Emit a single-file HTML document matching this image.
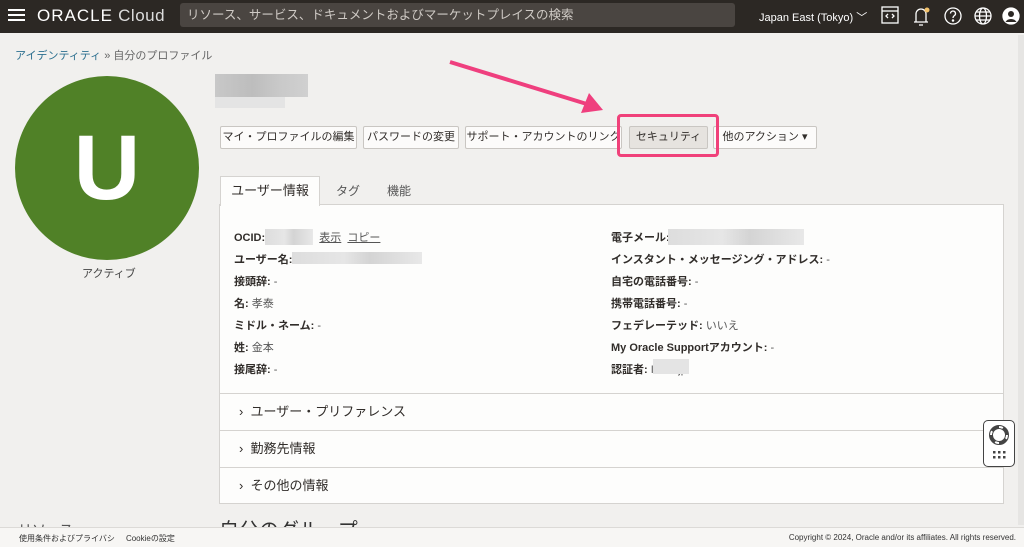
<!DOCTYPE html>
<html><head><meta charset="utf-8"><style>
*{box-sizing:border-box;margin:0;padding:0}
body{width:1024px;height:547px;overflow:hidden;background:#f1f0ee;font-family:"Liberation Sans","Noto Sans CJK JP",sans-serif;position:relative;color:#312d2a}
.a{position:absolute;white-space:nowrap}
.top{position:absolute;left:0;top:0;width:1024px;height:33px;background:#2c2824}
.btn{position:absolute;top:126px;height:23px;border:1px solid #c9c6c2;background:#fcfbfa;border-radius:2px;font-size:11px;line-height:21px;text-align:center;color:#312d2a;white-space:nowrap;overflow:hidden}
.lab{position:absolute;font-size:11px;font-weight:bold;white-space:nowrap}
.lab span{font-weight:normal;color:#555}
.blur{position:absolute;background:linear-gradient(90deg,#ddd,#e6e6e6 40%,#d4d4d4 60%,#e8e8e8)}
.sec{position:absolute;left:219px;width:785px;height:37px;border-top:1px solid #d5d3d0;font-size:13px;line-height:36px;padding-left:20px;color:#312d2a}
</style></head><body>
<div class="top"></div>
<div class="a" style="left:8px;top:9px;width:17px;height:2px;background:#fff;box-shadow:0 5px 0 #fff,0 10px 0 #fff"></div>
<div class="a" style="left:37px;top:6px;color:#fff;font-size:17px;letter-spacing:0.5px"><b style="font-weight:normal;letter-spacing:1px">ORACLE</b> <span style="color:#ddd">Cloud</span></div>
<div class="a" style="left:180px;top:3px;width:555px;height:24px;background:#4a4541;border-radius:3px;color:#cfcac5;font-size:12.5px;line-height:24px;padding-left:7px">リソース、サービス、ドキュメントおよびマーケットプレイスの検索</div>
<div class="a" style="left:759px;top:9px;color:#fff;font-size:11px">Japan East (Tokyo) ﹀</div>
<svg class="a" style="left:880px;top:4px" width="140" height="24" viewBox="0 0 140 24" fill="none" stroke="#fff" stroke-width="1.3">
<rect x="2" y="3" width="16" height="16"/><line x1="2" y1="7" x2="18" y2="7"/><path d="M8 10l-2 2 2 2M12 10l2 2-2 2"/>
<path d="M36 18V10a5 5 0 0110 0v8zM34 18h14M39 21h4"/><circle cx="47" cy="6" r="2.5" fill="#f3c26b" stroke="none"/>
<circle cx="73" cy="12" r="8"/><path d="M70.5 9.5a2.5 2.5 0 114 2c-1 .7-1.5 1.2-1.5 2.5"/><circle cx="73" cy="16.5" r=".6" fill="#fff"/>
<circle cx="103" cy="12" r="8"/><ellipse cx="103" cy="12" rx="3.5" ry="8"/><path d="M95 12h16M96 8h14M96 16h14"/>
<circle cx="131" cy="12" r="8" fill="#fff"/><circle cx="131" cy="10" r="3" fill="#2c2824" stroke="none"/><path d="M125.5 18a6 5 0 0111 0" fill="#2c2824" stroke="none"/>
</svg>
<div class="a" style="left:15px;top:47px;font-size:11px;color:#2c6f8f">アイデンティティ <span style="color:#666">» 自分のプロファイル</span></div>
<div class="a" style="left:15px;top:76px;width:184px;height:184px;border-radius:50%;background:#508127"></div>
<div class="a" style="left:15px;top:118px;width:184px;text-align:center;color:#fff;font-size:92px;font-weight:bold;line-height:100px">U</div>
<div class="a" style="left:82px;top:265px;font-size:11px;color:#444">アクティブ</div>
<div class="blur" style="left:215px;top:74px;width:93px;height:23px;background:linear-gradient(90deg,#c8c8c8,#bdbdbd 40%,#c9c9c9 70%,#d0d0d0)"></div>
<div class="blur" style="left:215px;top:97px;width:70px;height:11px;background:#e4e4e4"></div>
<div class="btn" style="left:220px;width:137px">マイ・プロファイルの編集</div>
<div class="btn" style="left:363px;width:96px">パスワードの変更</div>
<div class="btn" style="left:465px;width:157px">サポート・アカウントのリンク</div>
<div class="btn" style="left:629px;width:79px;background:#e6e3df">セキュリティ</div>
<div class="btn" style="left:713px;width:104px">他のアクション ▾</div>
<div class="a" style="left:617px;top:114px;width:102px;height:43px;border:3px solid #f0417a;border-radius:4px"></div>
<svg class="a" style="left:440px;top:55px" width="175" height="65"><line x1="10" y1="7" x2="150" y2="50" stroke="#ef3f7e" stroke-width="4"/><path d="M163 55L141 58l8-20z" fill="#ef3f7e"/></svg>
<div class="a" style="left:219px;top:204px;width:785px;height:300px;background:#fdfdfc;border:1px solid #d5d3d0"></div>
<div class="a" style="left:220px;top:176px;width:100px;height:30px;background:#fdfdfc;border:1px solid #d5d3d0;border-bottom:none;font-size:13px;line-height:28px;text-align:center">ユーザー情報</div>
<div class="a" style="left:336px;top:182px;font-size:12px;color:#555">タグ</div>
<div class="a" style="left:387px;top:182px;font-size:12px;color:#555">機能</div>
<div class="lab" style="left:234px;top:229px">OCID: <span style="display:inline-block;width:48px"></span> <u style="font-weight:normal;color:#555">表示</u> &nbsp;<u style="font-weight:normal;color:#555">コピー</u></div>
<div class="blur" style="left:265px;top:229px;width:48px;height:16px"></div>
<div class="lab" style="left:234px;top:251px">ユーザー名:</div>
<div class="blur" style="left:292px;top:252px;width:130px;height:12px"></div>
<div class="lab" style="left:234px;top:273px">接頭辞: <span>-</span></div>
<div class="lab" style="left:234px;top:295px">名: <span>孝泰</span></div>
<div class="lab" style="left:234px;top:317px">ミドル・ネーム: <span>-</span></div>
<div class="lab" style="left:234px;top:339px">姓: <span>金本</span></div>
<div class="lab" style="left:234px;top:361px">接尾辞: <span>-</span></div>
<div class="lab" style="left:611px;top:229px">電子メール:</div>
<div class="blur" style="left:668px;top:229px;width:136px;height:16px"></div>
<div class="lab" style="left:611px;top:251px">インスタント・メッセージング・アドレス: <span>-</span></div>
<div class="lab" style="left:611px;top:273px">自宅の電話番号: <span>-</span></div>
<div class="lab" style="left:611px;top:295px">携帯電話番号: <span>-</span></div>
<div class="lab" style="left:611px;top:317px">フェデレーテッド: <span>いいえ</span></div>
<div class="lab" style="left:611px;top:339px">My Oracle Supportアカウント: <span>-</span></div>
<div class="lab" style="left:611px;top:361px">認証者: <span>IL&nbsp;&nbsp;&nbsp;&nbsp;&nbsp;&nbsp;jp</span></div>
<div class="blur" style="left:653px;top:359px;width:36px;height:15px;background:#e4e4e4"></div>
<div class="sec" style="top:393px">›&nbsp; ユーザー・プリファレンス</div>
<div class="sec" style="top:430px">›&nbsp; 勤務先情報</div>
<div class="sec" style="top:467px">›&nbsp; その他の情報</div>
<div class="a" style="left:219px;top:514px;font-size:20px;color:#333">自分のグループ</div>
<div class="a" style="left:18px;top:520px;font-size:14px;color:#555">リソース</div>
<div class="a" style="left:0;top:527px;width:1024px;height:20px;background:#f7f6f4;border-top:1px solid #dcdad7"></div>
<div class="a" style="left:19px;top:533px;font-size:8px;color:#333">使用条件およびプライバシ &nbsp;&nbsp;&nbsp;&nbsp;Cookieの設定</div>
<div class="a" style="right:8px;top:533px;font-size:8px;color:#333">Copyright © 2024, Oracle and/or its affiliates. All rights reserved.</div>
<div class="a" style="left:1018px;top:35px;width:6px;height:490px;background:#e6e5e3"></div>
<div class="a" style="left:983px;top:420px;width:32px;height:47px;background:#fff;border:1.5px solid #444;border-radius:5px"></div>
<svg class="a" style="left:983px;top:420px" width="32" height="47"><circle cx="16" cy="15" r="8" fill="none" stroke="#444" stroke-width="4"/><circle cx="16" cy="15" r="8" fill="none" stroke="#fff" stroke-width="2" stroke-dasharray="4 8.5"/><g fill="#444"><rect x="10" y="31" width="2.5" height="2.5"/><rect x="15" y="31" width="2.5" height="2.5"/><rect x="20" y="31" width="2.5" height="2.5"/><rect x="10" y="36" width="2.5" height="2.5"/><rect x="15" y="36" width="2.5" height="2.5"/><rect x="20" y="36" width="2.5" height="2.5"/></g></svg>
</body></html>
